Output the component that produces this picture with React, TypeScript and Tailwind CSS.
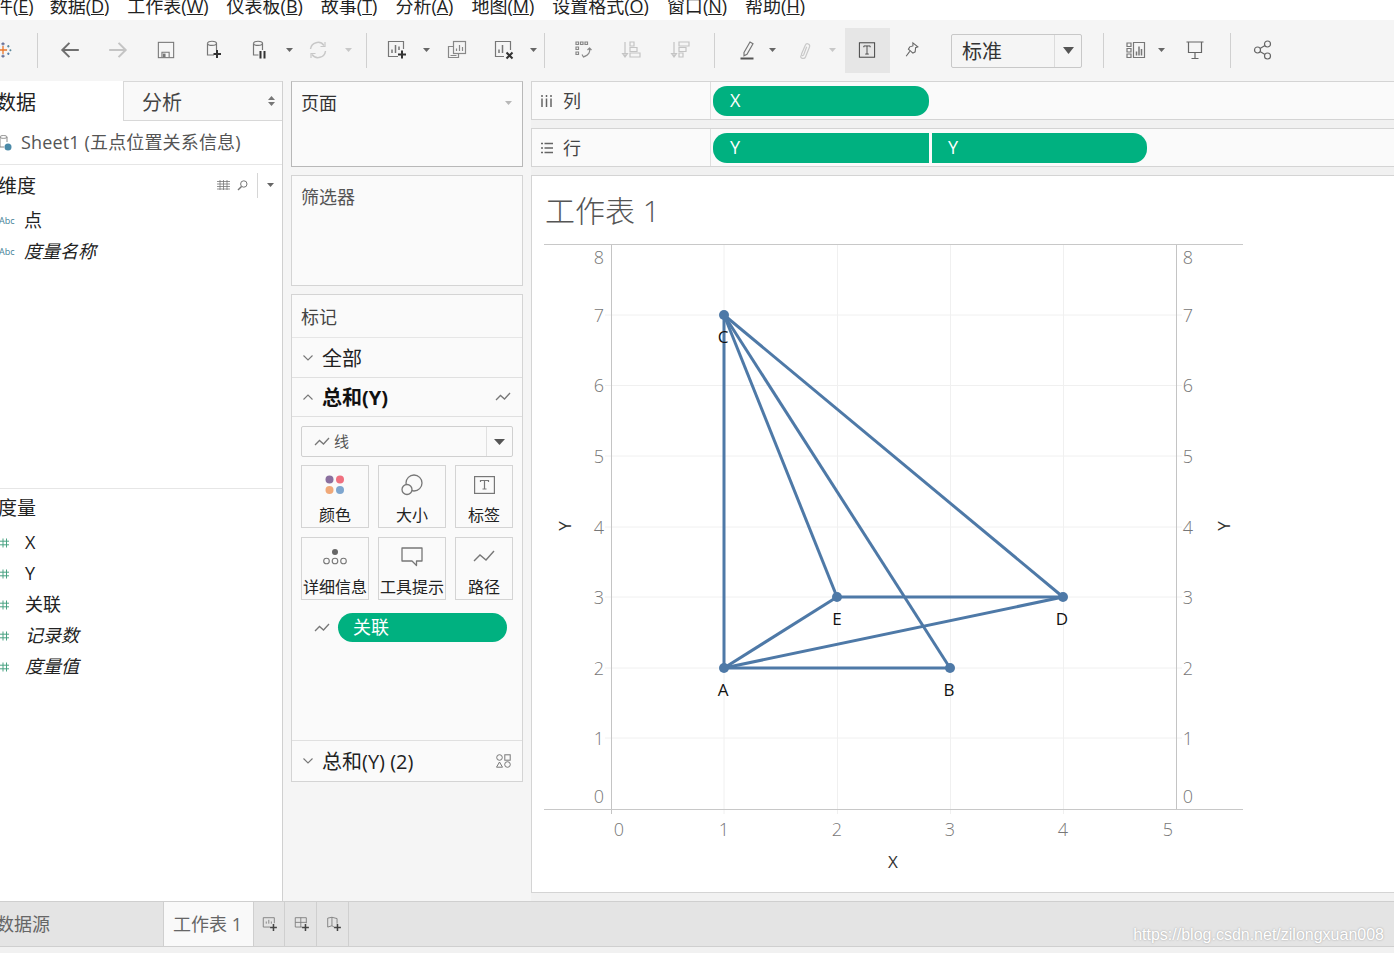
import { ReactNode } from "react";

const fontStack =
  "[font-family:'Open_Sans','Noto_Sans_CJK_SC',sans-serif]";

const menuItems = [
  ["件", "E"],
  ["数据", "D"],
  ["工作表", "W"],
  ["仪表板", "B"],
  ["故事", "T"],
  ["分析", "A"],
  ["地图", "M"],
  ["设置格式", "O"],
  ["窗口", "N"],
  ["帮助", "H"],
];

const Icon = ({ children, size = 20, className = "" }: { children: ReactNode; size?: number; className?: string }) => (
  <svg width={size} height={size} viewBox="0 0 20 20" fill="none" stroke="currentColor" strokeWidth="1.2" className={className}>
    {children}
  </svg>
);

const Caret = ({ className = "text-[#666]" }: { className?: string }) => (
  <svg width="7" height="4" viewBox="0 0 7 4" className={className}>
    <path d="M0 0h7L3.5 4z" fill="currentColor" />
  </svg>
);

const Sep = ({ className = "" }: { className?: string }) => <div className={`w-px h-[35px] bg-[#d0d0d0] shrink-0 ${className}`} />;

const Slot = ({ className, children }: { className: string; children: ReactNode }) => (
  <div className={`flex items-center justify-center shrink-0 ${className}`}>{children}</div>
);

const LineMark = ({ className = "text-[#777]" }: { className?: string }) => (
  <svg width="16" height="12" viewBox="0 0 16 12" fill="none" stroke="currentColor" strokeWidth="1.3" className={className}>
    <path d="M1 9l4.5-4.5 4 3.5L15 2" />
  </svg>
);

const Chevron = ({ up = false }: { up?: boolean }) => (
  <svg width="10" height="6" viewBox="0 0 10 6" fill="none" stroke="#777" strokeWidth="1.1">
    <path d={up ? "M0.5 5.5L5 1l4.5 4.5" : "M0.5 0.5L5 5l4.5-4.5"} />
  </svg>
);

const Hash = () => (
  <svg width="9" height="10" viewBox="0 0 9 10" fill="none" stroke="#4aa383" strokeWidth="1">
    <path d="M3 0.5v9M6.5 0.5v9M0 3.2h9M0 6.8h9" />
  </svg>
);

const Toolbar = () => (
  <div className="h-[61px] pb-px flex items-center bg-[#f5f5f5] shrink-0">
    <Slot className="w-6 -ml-[9px]">
      <svg width="18" height="18" viewBox="0 0 22 22" fill="none" strokeWidth="1.3">
        <path d="M11 6v10M6 11h10" stroke="#e8762b" strokeWidth="1.6" />
        <path d="M11 1.5v4M9 3.5h4M11 16.5v4M9 18.5h4" stroke="#5b6591" />
        <path d="M4.5 5v3M3 6.5h3M17.5 5v3M16 6.5h3" stroke="#59879b" />
        <path d="M4.5 14v3M3 15.5h3M17.5 14v3M16 15.5h3" stroke="#4e79a7" />
        <path d="M2 10v2.500M0.800 11.200h2.500M20 10v2.500M18.800 11.200h2.500" stroke="#59879b" />
      </svg>
    </Slot>
    <Sep className="ml-[22px]" />
    <Slot className="w-12 ml-2 text-[#6f6f6f]">
      <Icon size={22}>
        <path d="M18 10H3M9.500 3.500L3 10l6.500 6.500" strokeWidth="1.800" />
      </Icon>
    </Slot>
    <Slot className="w-12 text-[#c4c4c4]">
      <Icon size={22}>
        <path d="M2 10h15M10.500 3.500L17 10l-6.500 6.500" strokeWidth="1.800" />
      </Icon>
    </Slot>
    <Slot className="w-12 text-[#777]">
      <Icon size={18}>
        <rect x="1.500" y="1.500" width="17" height="17" />
        <path d="M5.500 18v-5.500h8V18" />
        <rect x="6.500" y="14" width="3" height="4" fill="currentColor" stroke="none" />
      </Icon>
    </Slot>
    <Slot className="w-[47px] text-[#777]">
      <Icon size={20}>
        <path d="M10 15H3.500V3.500" />
        <path d="M3.500 3.500c0-3 9-3 9 0V10" />
        <path d="M3.500 3.500c0 2.500 9 2.500 9 0" />
        <path d="M13 10v8M9.500 14h7.500" stroke="#333" strokeWidth="2" />
      </Icon>
    </Slot>
    <Slot className="w-[46px] text-[#777]">
      <Icon size={20}>
        <path d="M8.500 15h-5V3.500" />
        <path d="M3.500 3.500c0-3 9-3 9 0V10" />
        <path d="M3.500 3.500c0 2.500 9 2.500 9 0" />
        <path d="M10.500 11v7.500M14.500 11v7.500" stroke="#333" strokeWidth="2" />
      </Icon>
    </Slot>
    <Slot className="w-3">
      <Caret />
    </Slot>
    <Slot className="w-[46px] text-[#c8c8c8]">
      <Icon size={20}>
        <path d="M2.500 9a7.500 7.500 0 0 1 13.500-3.500M17.500 11A7.500 7.500 0 0 1 4 14.500" strokeWidth="1.500" />
        <path d="M17 2v4.500h-4.500M3 18v-4.500h4.500" strokeWidth="1.200" />
      </Icon>
    </Slot>
    <Slot className="w-3 ml-px">
      <Caret className="text-[#c8c8c8]" />
    </Slot>
    <Sep className="ml-3" />
    <Slot className="w-11 ml-2 text-[#777]">
      <Icon size={20}>
        <path d="M11 16.500H1.500v-15h15V9" />
        <path d="M5 13v-3.500M8.500 13V5M12 10V6.500" strokeWidth="1.500" />
        <path d="M15 10.500v8M11 14.500h8" stroke="#333" strokeWidth="2" />
      </Icon>
    </Slot>
    <Slot className="w-3 ml-px">
      <Caret />
    </Slot>
    <Slot className="w-[50px] text-[#888]">
      <Icon size={20}>
        <path d="M6.500 6.500h-5v11h10v-4" />
        <rect x="6.500" y="1.500" width="12" height="12" fill="#f5f5f5" />
        <path d="M9.500 11V8.500M12.500 11V5M15.500 11V7M3.500 15.500h6" />
      </Icon>
    </Slot>
    <Slot className="w-11 text-[#777]">
      <Icon size={20}>
        <path d="M10 16.500H1.500v-15h15V10" />
        <path d="M5 13v-3.500M8.500 13V5" strokeWidth="1.500" />
        <path d="M12.500 12.500l6 6M18.500 12.500l-6 6" stroke="#333" strokeWidth="2" />
      </Icon>
    </Slot>
    <Slot className="w-3 ml-px">
      <Caret />
    </Slot>
    <Sep className="ml-[5px]" />
    <Slot className="w-12 ml-[14px] text-[#888]">
      <Icon size={20}>
        <path d="M3 2h2.500v2.500H3zM7.500 2H10v2.500H7.500zM12 2h2.500v2.500H12zM3 7h2.500v2.500H3zM3 12h2.500v2.500H3z" />
        <path d="M16.500 8c1 4-1 7.500-5.500 8.500M9 14.500l1.500 2.500 2.500-1M14.500 10l2-2 2 2" />
      </Icon>
    </Slot>
    <Slot className="w-12 text-[#c4c4c4]">
      <Icon size={20}>
        <path d="M4 2v14M1.500 13.500L4 17l2.500-3.500z" />
        <path d="M9 2h4v4H9zM9 7.500h7v4H9zM9 13h10v4H9z" />
      </Icon>
    </Slot>
    <Slot className="w-12 ml-px text-[#c4c4c4]">
      <Icon size={20}>
        <path d="M4 2v14M1.500 13.500L4 17l2.500-3.500z" />
        <path d="M9 2h10v4H9zM9 7.500h7v4H9zM9 13h4v4H9z" />
      </Icon>
    </Slot>
    <Sep className="ml-[10px]" />
    <Slot className="w-11 ml-[10px] text-[#777]">
      <Icon size={20}>
        <path d="M7 12.500L13 2l3 1.800-6 10.500-3 1.500z" />
        <path d="M3.500 18.500h13" stroke="#555" strokeWidth="2" />
      </Icon>
    </Slot>
    <Slot className="w-3 -ml-[3px]">
      <Caret />
    </Slot>
    <Slot className="w-11 ml-1 text-[#c8c8c8]">
      <Icon size={20}>
        <path d="M7 15.500c-1.500 3 3.500 4 4.500 1.500l4-10c1-3-3-4.500-4.200-1.800L7.500 14c-.5 1.500 1.500 2.200 2.200.8l3-8" />
      </Icon>
    </Slot>
    <Slot className="w-3">
      <Caret className="text-[#c8c8c8]" />
    </Slot>
    <Slot className="w-[45px] h-[45px] ml-[7px] bg-[#e6e6e6] text-[#333]">
      <Icon size={18} className="-ml-[1px]">
        <rect x="1.500" y="2" width="17" height="16" strokeWidth="1" />
        <path d="M6.500 7V5.500h7V7M10 5.500v9M8 14.500h4" strokeWidth="0.900" />
      </Icon>
    </Slot>
    <Slot className="w-11 text-[#666]">
      <Icon size={18}>
        <path d="M11 2l5.500 4.500-2.500 1-.5 4.500-2.500 1.500L6 9l1.500-2.500 3.500-1zM7.500 11.500L3.500 17" />
      </Icon>
    </Slot>
    <div className="w-[131px] h-[34px] ml-[17px] mt-px flex shrink-0 border border-[#c8c8c8] rounded-[2px] text-[20px] text-[#333]">
      <div className="flex-1 flex items-center pl-[10px] pt-[3px]">标准</div>
      <div className="w-[27px] flex items-center justify-center border-l border-[#dcdcdc]">
        <svg width="11" height="7" viewBox="0 0 11 7" className="text-[#555]">
          <path d="M0 0h11L5.500 7z" fill="currentColor" />
        </svg>
      </div>
    </div>
    <Sep className="ml-[21px]" />
    <Slot className="w-11 ml-[10px] text-[#777]">
      <Icon size={20}>
        <path d="M1 3h4v3.500H1zM1 8.500h4V12H1zM1 14h4v3.500H1zM7.500 2.500h11v15h-11z" />
        <path d="M10.500 15.500v-4M13 15.500v-9M15.500 15.500V9" strokeWidth="1.500" />
      </Icon>
    </Slot>
    <Slot className="w-3 -ml-[3px]">
      <Caret />
    </Slot>
    <Slot className="w-11 ml-[6px] text-[#666]">
      <Icon size={20}>
        <path d="M1.500 2h17M3.500 2v10.500h13V2M10 12.500v6M6.500 18.500h7" />
      </Icon>
    </Slot>
    <Sep className="ml-[13px]" />
    <Slot className="w-11 ml-[10px] text-[#666]">
      <Icon size={20}>
        <circle cx="4.500" cy="10" r="3" />
        <circle cx="14.500" cy="4" r="3" />
        <circle cx="14.500" cy="16" r="3" />
        <path d="M7 8.500l5-3M7 11.500l5 3" />
      </Icon>
    </Slot>
  </div>
);

const LeftPanel = () => (
  <div className="w-[283px] shrink-0 bg-white border-r border-[#d0d0d0] flex flex-col">
    <div className="flex h-10 shrink-0 text-[20px] text-[#222]">
      <div className="w-[123px] flex items-center overflow-hidden pt-1">
        <span className="-ml-1">数据</span>
      </div>
      <div className="flex-1 flex items-center justify-between pl-[18px] pr-[7px] pt-1 bg-[#f9f9f9] border-l border-y border-[#d8d8d8] text-[#444]">
        <span>分析</span>
        <svg width="7" height="10" viewBox="0 0 7 10" className="text-[#777] -mt-1">
          <path d="M3.500 0L7 4H0zM3.500 10L0 6h7z" fill="currentColor" />
        </svg>
      </div>
    </div>
    <div className="h-[44px] shrink-0 flex items-center border-b border-[#e6e6e6] text-[18px] text-[#555] overflow-hidden">
      <svg width="14" height="18" viewBox="0 0 14 18" fill="none" className="shrink-0 -ml-[2px] mr-[9px]">
        <path d="M2 3c0-2 7-2 7 0v5M2 3v10h4M2 3c0 1.800 7 1.800 7 0" stroke="#888" />
        <circle cx="10" cy="13" r="3.500" fill="#4a8aa8" />
      </svg>
      <span className="whitespace-nowrap tracking-[0.15px]">Sheet1 (五点位置关系信息)</span>
    </div>
    <div className="h-[324px] shrink-0 border-b border-[#e6e6e6]">
      <div className="h-10 flex items-center justify-between text-[19px] text-[#222] overflow-hidden">
        <span className="-ml-[2px] pt-[2px]">维度</span>
        <div className="flex items-center text-[#777]">
          <svg width="13" height="10" viewBox="0 0 13 10" stroke="currentColor" fill="none">
            <path d="M0 1.500h13M0 4h13M0 6.500h13M0 9h13M3 0v10M6.500 0v10M10 0v10" strokeWidth="0.800" />
          </svg>
          <svg width="11" height="11" viewBox="0 0 11 11" stroke="currentColor" fill="none" className="ml-[7px]">
            <circle cx="6.800" cy="4" r="3.200" />
            <path d="M4.500 6.500L1 10" strokeWidth="1.500" />
          </svg>
          <div className="w-px h-[25px] bg-[#d6d6d6] ml-[9px] mr-[9px]" />
          <Caret className="text-[#666] mr-2" />
        </div>
      </div>
      {[
        { name: "点", italic: false },
        { name: "度量名称", italic: true },
      ].map((f) => (
        <div key={f.name} className="h-[31px] flex items-center text-[18px] text-[#222]">
          <span className="w-[25px] text-[9px] text-[#3f7f96] -ml-px shrink-0">Abc</span>
          <span className={f.italic ? "italic" : ""}>{f.name}</span>
        </div>
      ))}
    </div>
    <div className="h-[38px] flex items-center text-[19px] text-[#222] overflow-hidden shrink-0">
      <span className="-ml-[2px]">度量</span>
    </div>
    {[
      { name: "X", italic: false },
      { name: "Y", italic: false },
      { name: "关联", italic: false },
      { name: "记录数", italic: true },
      { name: "度量值", italic: true },
    ].map((f) => (
      <div key={f.name} className="h-[31px] flex items-center text-[18px] text-[#222] shrink-0">
        <span className="w-[25px] shrink-0">
          <Hash />
        </span>
        <span className={f.italic ? "italic" : ""}>{f.name}</span>
      </div>
    ))}
  </div>
);

const MarkButton = ({ label, width, icon }: { label: string; width: string; icon: ReactNode }) => (
  <div className={`h-[63px] ${width} shrink-0 border border-[#d4d4d4] flex flex-col items-center`}>
    <div className="h-[38px] flex items-center justify-center">{icon}</div>
    <div className="text-[16px] leading-[22px] text-[#222] whitespace-nowrap">{label}</div>
  </div>
);

const MiddlePanel = () => (
  <div className="w-[248px] shrink-0 bg-[#f5f5f5] px-2 flex flex-col">
    <div className="h-[86px] shrink-0 bg-[#fafafa] border border-[#b8b8b8] border-t-[#c8c8c8] px-[9px] pt-[8px] flex justify-between text-[18px] leading-[26px] text-[#333]">
      <span>页面</span>
      <Caret className="text-[#b8b8b8] mt-[11px] mr-[1px]" />
    </div>
    <div className="h-[111px] shrink-0 mt-2 bg-[#fafafa] border border-[#d4d4d4] px-[9px] pt-[8px] text-[18px] leading-[26px] text-[#555]">筛选器</div>
    <div className="h-[488px] shrink-0 mt-2 bg-[#fafafa] border border-[#d4d4d4] flex flex-col">
      <div className="h-[43px] shrink-0 flex items-center px-[9px] pt-[2px] text-[18px] text-[#444] border-b border-[#e6e6e6]">标记</div>
      <div className="h-10 shrink-0 flex items-center pl-[11px] border-b border-[#e0e0e0] text-[20px] text-[#222]">
        <Chevron />
        <span className="ml-[9px] pt-[2px]">全部</span>
      </div>
      <div className="h-[39px] shrink-0 flex items-center pl-[11px] pr-[11px] border-b border-[#e0e0e0] text-[20px] font-bold text-[#111]">
        <Chevron up />
        <span className="ml-[9px] pt-[2px] flex-1">总和(Y)</span>
        <LineMark />
      </div>
      <div className="mx-[9px] mt-[9px] h-[31px] shrink-0 flex border border-[#d0d0d0] rounded-[2px] bg-[#fafafa]">
        <div className="flex-1 flex items-center pl-[12px] text-[15px] text-[#555]">
          <LineMark />
          <span className="ml-1">线</span>
        </div>
        <div className="w-[26px] flex items-center justify-center border-l border-[#e0e0e0]">
          <svg width="11" height="6" viewBox="0 0 11 6" className="text-[#555]">
            <path d="M0 0h11L5.500 6z" fill="currentColor" />
          </svg>
        </div>
      </div>
      <div className="mx-[9px] mt-[8px] flex gap-[9px]">
        <MarkButton
          label="颜色"
          width="w-[68px]"
          icon={
            <svg width="20" height="20" viewBox="0 0 20 20">
              <circle cx="4.500" cy="4.500" r="4" fill="#8a6f9e" />
              <circle cx="15" cy="4.500" r="4" fill="#f0707f" />
              <circle cx="4.500" cy="15" r="4" fill="#f0a878" />
              <circle cx="15" cy="15" r="4" fill="#7ea6cf" />
            </svg>
          }
        />
        <MarkButton
          label="大小"
          width="w-[68px]"
          icon={
            <svg width="22" height="22" viewBox="0 0 22 22" fill="none" stroke="#777" strokeWidth="1.300">
              <circle cx="13" cy="9" r="8" />
              <circle cx="6" cy="15.500" r="5" fill="#fafafa" />
            </svg>
          }
        />
        <MarkButton
          label="标签"
          width="w-[58px]"
          icon={
            <svg width="21" height="18" viewBox="0 0 21 18" fill="none" stroke="#777" strokeWidth="1.200">
              <rect x="0.600" y="0.600" width="19.800" height="16.800" />
              <path d="M6.500 6V4.500h8V6M10.500 4.500v8.500M8.500 13h4" />
            </svg>
          }
        />
      </div>
      <div className="mx-[9px] mt-[9px] flex gap-[9px]">
        <MarkButton
          label="详细信息"
          width="w-[68px]"
          icon={
            <svg width="24" height="18" viewBox="0 0 24 18" fill="none" stroke="#777" strokeWidth="1.100">
              <circle cx="12" cy="4" r="3" fill="#666" stroke="none" />
              <circle cx="3.500" cy="13" r="2.800" />
              <circle cx="12" cy="13" r="2.800" />
              <circle cx="20.500" cy="13" r="2.800" />
            </svg>
          }
        />
        <MarkButton
          label="工具提示"
          width="w-[68px]"
          icon={
            <svg width="22" height="20" viewBox="0 0 22 20" fill="none" stroke="#777" strokeWidth="1.300">
              <path d="M1 1h20v13h-5.500v4.500L11 14H1z" strokeLinejoin="round" />
            </svg>
          }
        />
        <MarkButton
          label="路径"
          width="w-[58px]"
          icon={
            <svg width="22" height="14" viewBox="0 0 22 14" fill="none" stroke="#777" strokeWidth="1.400">
              <path d="M1 11l6-6 6 5 8-9" />
            </svg>
          }
        />
      </div>
      <div className="mt-[13px] pl-[22px] flex items-center shrink-0">
        <LineMark />
        <div className="ml-2 w-[169px] h-[29px] rounded-full bg-[#00b180] text-white text-[18px] flex items-center pl-[15px]">关联</div>
      </div>
      <div className="flex-1" />
      <div className="h-[41px] shrink-0 flex items-center pl-[11px] pr-[11px] border-t border-[#e0e0e0] text-[20px] text-[#222]">
        <Chevron />
        <span className="ml-[9px] pt-[2px] flex-1">总和(Y) (2)</span>
        <svg width="15" height="14" viewBox="0 0 15 14" fill="none" stroke="#777">
          <circle cx="3.500" cy="3.500" r="2.800" />
          <rect x="8.800" y="0.800" width="5.400" height="5.400" />
          <path d="M3.500 8l3 5.200h-6z" />
          <circle cx="11.500" cy="10.500" r="2.800" />
        </svg>
      </div>
    </div>
  </div>
);

const Shelf = ({ icon, label, children }: { icon: ReactNode; label: string; children: ReactNode }) => (
  <div className="h-[39px] shrink-0 flex bg-[#fafafa] border-y border-l border-[#d4d4d4]">
    <div className="w-[179px] shrink-0 flex items-center pl-[9px] border-r border-[#dedede] text-[18px] text-[#444]">
      {icon}
      <span className="ml-[10px] pt-px">{label}</span>
    </div>
    <div className="flex items-center pl-[2px] gap-[3px]">{children}</div>
  </div>
);

const points = {
  A: [724, 668],
  B: [950, 668],
  C: [724, 315],
  D: [1063, 597],
  E: [837, 597],
};
const edges = ["AB", "AC", "AD", "AE", "BC", "CD", "CE", "ED"];
const gridY: [string, number, number][] = [
  ["8", 244, 257],
  ["7", 315, 315],
  ["6", 385.5, 385],
  ["5", 456, 456],
  ["4", 527, 527],
  ["3", 597, 597],
  ["2", 668, 668],
  ["1", 738, 738],
  ["0", 809, 796],
];
const gridX: [string, number, number][] = [
  ["0", 611, 619],
  ["1", 724, 724],
  ["2", 837.5, 837],
  ["3", 950.5, 950],
  ["4", 1063.5, 1063],
  ["5", 1176, 1168],
];
const labels: [string, number, number][] = [
  ["C", 723, 336],
  ["E", 837, 618],
  ["D", 1062, 618],
  ["A", 723, 689],
  ["B", 949, 689],
];

const Chart = () => (
  <svg width="700" height="640" viewBox="544 244 700 640" className="block ml-3 shrink-0">
    {gridY.slice(1, 8).map(([t, y]) => (
      <line key={t} x1="605" x2="1182" y1={y} y2={y} stroke="#f0f0f0" strokeWidth="1" />
    ))}
    {gridX.slice(1, 5).map(([t, x]) => (
      <line key={t} x1={x} x2={x} y1="244" y2="814" stroke="#f0f0f0" strokeWidth="1" />
    ))}
    <line x1="611.500" x2="611.500" y1="244" y2="814" stroke="#c4c4c4" />
    <line x1="1176.500" x2="1176.500" y1="244" y2="809" stroke="#c4c4c4" />
    <line x1="544" x2="1243" y1="244.500" y2="244.500" stroke="#c8c8c8" />
    <line x1="544" x2="1243" y1="809.500" y2="809.500" stroke="#c8c8c8" />
    {edges.map((e) => {
      const a = points[e[0] as keyof typeof points];
      const b = points[e[1] as keyof typeof points];
      return <line key={e} x1={a[0]} y1={a[1]} x2={b[0]} y2={b[1]} stroke="#4e79a7" strokeWidth="3" />;
    })}
    {Object.entries(points).map(([k, p]) => (
      <circle key={k} cx={p[0]} cy={p[1]} r="5" fill="#4e79a7" />
    ))}
    <g fontSize="18" fontWeight="300" fill="#777" textAnchor="middle" dominantBaseline="central">
      {gridY.map(([t, , ty]) => (
        <text key={t} x="599" y={ty}>
          {t}
        </text>
      ))}
      {gridY.map(([t, , ty]) => (
        <text key={t} x="1188" y={ty}>
          {t}
        </text>
      ))}
      {gridX.map(([t, , tx]) => (
        <text key={t} x={tx} y="829">
          {t}
        </text>
      ))}
    </g>
    <g fontSize="17" fill="#111" textAnchor="middle" dominantBaseline="central">
      {labels.map(([t, x, y]) => (
        <text key={t} x={x} y={y}>
          {t}
        </text>
      ))}
      <text x="893" y="861" fill="#333">
        X
      </text>
      <text x="564" y="526" fill="#333" transform="rotate(-90 564 526)">
        Y
      </text>
      <text x="1223" y="526" fill="#333" transform="rotate(-90 1223 526)">
        Y
      </text>
    </g>
  </svg>
);

const Viz = () => (
  <div className="flex-1 min-w-0 flex flex-col">
    <Shelf
      label="列"
      icon={
        <svg width="12" height="12" viewBox="0 0 12 12" stroke="#666" strokeWidth="1.500">
          <path d="M1 3.500V12M5.500 3.500V12M10 3.500V12M1 0v2M5.500 0v2M10 0v2" />
        </svg>
      }
    >
      <div className="w-[216px] h-[30px] rounded-l-[14px] rounded-r-[14px] bg-[#00b180] text-white text-[18px] flex items-center pl-[17px]">X</div>
    </Shelf>
    <div className="h-2 shrink-0" />
    <Shelf
      label="行"
      icon={
        <svg width="12" height="12" viewBox="0 0 12 12" stroke="#666" strokeWidth="1.500">
          <path d="M3.500 1.500H12M3.500 6H12M3.500 10.500H12M0 1.500h2M0 6h2M0 10.500h2" />
        </svg>
      }
    >
      <div className="w-[216px] h-[30px] rounded-l-[14px] bg-[#00b180] text-white text-[18px] flex items-center pl-[17px]">Y</div>
      <div className="w-[215px] h-[30px] rounded-r-[14px] bg-[#00b180] text-white text-[18px] flex items-center pl-4">Y</div>
    </Shelf>
    <div className="h-2 shrink-0" />
    <div className="h-[718px] shrink-0 bg-white border-y border-l border-[#d4d4d4] flex flex-col overflow-hidden">
      <div className="h-[68px] shrink-0 pl-[13px] pt-[10px] text-[30px] leading-[50px] font-light text-[#555]">工作表 1</div>
      <Chart />
    </div>
  </div>
);

const BottomBar = () => (
  <div className="h-[46px] shrink-0 bg-[#e4e4e4] border-y border-[#cfcfcf] flex">
    <div className="w-[164px] shrink-0 flex items-center overflow-hidden text-[18px] text-[#666] border-r border-[#cfcfcf]">
      <span className="-ml-[4px]">数据源</span>
    </div>
    <div className="w-[89px] shrink-0 bg-[#f9f9f9] flex items-center pl-[9px] text-[18px] text-[#666] whitespace-nowrap">工作表 1</div>
    <Slot className="w-[32px] h-full border-x border-[#cfcfcf] text-[#777]">
      <Icon size={17} className="ml-[2px]">
        <path d="M9.500 13H1.500V2h13v6.500M5 9V6.500M8 9V4.500M11 9V6.500" strokeWidth="1" />
        <path d="M13.500 9.500v8M9.500 13.500h8" stroke="#444" strokeWidth="1.800" />
      </Icon>
    </Slot>
    <Slot className="w-[32px] h-full border-r border-[#cfcfcf] text-[#777]">
      <Icon size={17} className="ml-[3px]">
        <path d="M9.500 13H1.500V2h13v6.500M1.500 7.500h13M8 2v11" strokeWidth="1" />
        <path d="M13.500 9.500v8M9.500 13.500h8" stroke="#444" strokeWidth="1.800" />
      </Icon>
    </Slot>
    <Slot className="w-[32px] h-full border-r border-[#cfcfcf] text-[#777]">
      <Icon size={17} className="ml-[3px]">
        <path d="M9.500 13L7 11.500 2 13V2.500L7 1.500l6 1.500v6M7 1.500v10" strokeWidth="1" />
        <path d="M13.500 9.500v8M9.500 13.500h8" stroke="#444" strokeWidth="1.800" />
      </Icon>
    </Slot>
  </div>
);

const App = () => {
  return (
    <div className={`relative w-[1394px] h-[953px] overflow-hidden bg-[#f1f1f1] flex flex-col ${fontStack}`}>
      <div className="h-5 shrink-0 bg-white overflow-hidden flex items-start gap-[18px] text-[18px] leading-6 text-[#222] whitespace-nowrap">
        {menuItems.map(([name, key]) => (
          <span key={key} className="-mt-[6px] first:-ml-[5px] first:-mr-[2px]">
            {name}(<span className="underline">{key}</span>)
          </span>
        ))}
      </div>
      <Toolbar />
      <div className="h-[820px] shrink-0 flex">
        <LeftPanel />
        <MiddlePanel />
        <Viz />
      </div>
      <BottomBar />
      <div className="absolute right-[10px] bottom-[6px] text-[16px] text-white [font-family:'Liberation_Sans',sans-serif] [text-shadow:0_0_2px_#999] whitespace-nowrap">
        https://blog.csdn.net/zilongxuan008
      </div>
    </div>
  );
};

export default App;
